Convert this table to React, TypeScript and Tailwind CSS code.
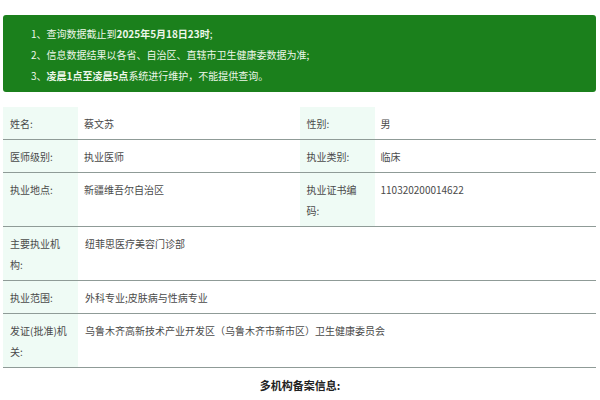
const rows: { cells: [string, string][]; }[] = [
  { cells: [["姓名:", "蔡文苏"], ["性别:", "男"]] },
  { cells: [["医师级别:", "执业医师"], ["执业类别:", "临床"]] },
  { cells: [["执业地点:", "新疆维吾尔自治区"], ["执业证书编码:", "110320200014622"]] },
];

const wideRows: [string, string][] = [
  ["主要执业机构:", "纽菲思医疗美容门诊部"],
  ["执业范围:", "外科专业;皮肤病与性病专业"],
  ["发证(批准)机关:", "乌鲁木齐高新技术产业开发区（乌鲁木齐市新市区）卫生健康委员会"],
];

function Label({ text }: { text: string }) {
  return (
    <div className="w-[75px] shrink-0 bg-[#effbf5] pl-[7px] pr-[10px] pt-[6px] pb-[5px] text-[#4a4a4a]">
      {text}
    </div>
  );
}

export default function App() {
  return (
    <div
      className="w-[600px] h-[400px] overflow-hidden bg-white px-[3px] pt-[15px] text-[10px] leading-[21px]"
      style={{ fontFamily: '"Noto Sans CJK SC", "Noto Sans", sans-serif' }}
    >
      {/* notice banner */}
      <div className="w-[593px] h-[77px] rounded-[3px] bg-[#1b801c] pl-[28px] pt-[8px] text-[10px] leading-[21px] text-[#eef7ea]">
        <p>1、查询数据截止到<b>2025年5月18日23时</b>;</p>
        <p>2、信息数据结果以各省、自治区、直辖市卫生健康委数据为准;</p>
        <p>3、<b>凌晨1点至凌晨5点</b>系统进行维护，不能提供查询。</p>
      </div>

      <div className="mt-[15px] w-[593px]">
        {rows.map((row, i) => (
          <div key={i} className="flex border-b border-[#8f9b97]">
            {row.cells.map(([label, value]) => (
              <div key={label} className="flex flex-1">
                <Label text={label} />
                <div className="flex-1 px-[6px] pt-[6px] pb-[5px] text-[#4a4a4a]">{value}</div>
              </div>
            ))}
          </div>
        ))}
        {wideRows.map(([label, value]) => (
          <div key={label} className="flex border-b border-[#8f9b97]">
            <Label text={label} />
            <div className="flex-1 px-[7px] pt-[6px] pb-[5px] text-[#4a4a4a]">{value}</div>
          </div>
        ))}
      </div>

      <div className="mt-[7px] text-center text-[11px] font-bold text-[#222]">多机构备案信息:</div>
    </div>
  );
}
